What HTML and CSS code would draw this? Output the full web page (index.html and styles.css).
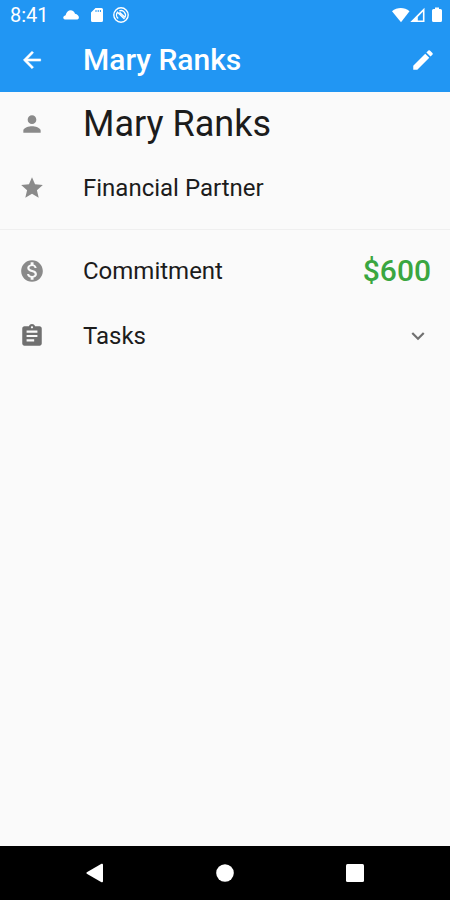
FILE: index.html
```html
<!DOCTYPE html>
<html lang="en">
<head>
<meta charset="utf-8">
<meta name="viewport" content="width=device-width, initial-scale=1">
<title>Mary Ranks</title>
<link rel="stylesheet" href="styles.css">
</head>
<body>
<header class="top">
  <div class="status">
    <span class="clock">8:41</span>
    <svg class="cloud" width="16" height="16" viewBox="0 0 16 16"><path d="M2 12.500C-.5 12-.3 9.200 2.600 8.300 3.500 5 5.500 3.300 7.500 3.300c2.300 0 3.800 1.500 4.500 3.500 3.800.7 5.200 4.700 2.500 5.700z"/></svg>
    <svg class="card" width="12" height="16" viewBox="0 0 12 16"><path fill-rule="evenodd" d="M4.500 1H10.500a1.500 1.500 0 0 1 1.500 1.500v11a1.500 1.500 0 0 1-1.500 1.500h-9A1.500 1.500 0 0 1 0 13.500V5.500zM4.500 3v2h1V3zm2.200 0v2h1V3zm2.200 0v2h1V3z"/></svg>
    <svg class="sync" width="16" height="16" viewBox="0 0 16 16"><g class="line"><circle cx="8" cy="8" r="7.200"/><path d="M5.200 11.500A4.500 4.500 0 0 1 4.500 5.200L11.500 12M6.300 3.900A4.500 4.500 0 0 1 11.900 10.200L6.500 5.200"/></g></svg>
    <span class="signals">
      <svg width="18" height="16" viewBox="0 0 18 16"><path d="M9 15.200L0 4.300C5-.1 12.500-.1 17.500 4.300z"/></svg>
      <svg width="15" height="16" viewBox="0 0 15 16"><path fill-rule="evenodd" d="M14.500 .8v14.200H.3zM12.900 4.800L7.800 10v3.400h5.100z"/></svg>
      <svg class="battery" width="10" height="16" viewBox="0 0 10 16"><path d="M3 .5h4V2h1.500A1.500 1.500 0 0 1 10 3.500v10A1.500 1.500 0 0 1 8.500 15h-7A1.500 1.500 0 0 1 0 13.500v-10A1.500 1.500 0 0 1 1.500 2H3z"/></svg>
    </span>
  </div>
  <div class="bar">
    <button class="icon-button" type="button" aria-label="Back"><svg class="icon bold" viewBox="0 0 24 24"><path d="M20 11H7.830l5.590-5.590L12 4l-8 8 8 8 1.410-1.410L7.830 13H20z"/></svg></button>
    <h1 class="title">Mary Ranks</h1>
    <button class="icon-button" type="button" aria-label="Edit"><svg class="icon" viewBox="0 0 24 24"><path d="M3 17.250V21h3.750L17.810 9.940l-3.750-3.750zM20.710 7.040a1 1 0 0 0 0-1.410l-2.340-2.340a1 1 0 0 0-1.410 0l-1.830 1.830 3.750 3.750z"/></svg></button>
  </div>
</header>
<main class="content">
  <div class="row">
    <svg class="icon" viewBox="0 0 24 24"><path d="M12 12a4 4 0 1 0 0-8 4 4 0 0 0 0 8zm0 2c-2.670 0-8 1.340-8 4v2h16v-2c0-2.660-5.330-4-8-4z"/></svg>
    <h2 class="name">Mary Ranks</h2>
  </div>
  <div class="row">
    <svg class="icon" viewBox="0 0 24 24"><path d="M12 17.270L18.180 21l-1.640-7.030L22 9.240l-7.190-.61L12 2 9.190 8.630 2 9.240l5.460 4.730L5.820 21z"/></svg>
    <span class="label">Financial Partner</span>
  </div>
  <hr class="divider">
  <div class="row">
    <svg class="icon" viewBox="0 0 24 24"><path d="M12 2C6.480 2 2 6.480 2 12s4.480 10 10 10 10-4.480 10-10S17.520 2 12 2zm1.410 16.090V20h-2.670v-1.930c-1.710-.36-3.160-1.460-3.270-3.400h1.960c.1 1.050.82 1.870 2.650 1.870 1.960 0 2.400-.98 2.400-1.590 0-.83-.44-1.610-2.670-2.140-2.480-.6-4.180-1.620-4.180-3.670 0-1.720 1.390-2.840 3.110-3.210V4h2.670v1.950c1.860.45 2.790 1.860 2.850 3.390H14.300c-.05-1.110-.64-1.870-2.220-1.870-1.500 0-2.400.68-2.400 1.640 0 .84.65 1.390 2.670 1.910s4.180 1.390 4.180 3.910c-.01 1.830-1.380 2.830-3.120 3.160z"/></svg>
    <span class="label">Commitment</span>
    <span class="amount">$600</span>
  </div>
  <button class="row tasks" type="button" aria-expanded="false">
    <svg class="icon dark" viewBox="0 0 24 24"><path d="M19 3h-4.180C14.400 1.840 13.300 1 12 1s-2.400.84-2.820 2H5c-1.100 0-2 .9-2 2v14c0 1.100.9 2 2 2h14c1.100 0 2-.9 2-2V5c0-1.100-.9-2-2-2zm-7 0c.55 0 1 .45 1 1s-.45 1-1 1-1-.45-1-1 .45-1 1-1zm2 14H7v-2h7zm3-4H7v-2h10zm0-4H7V7h10z"/></svg>
    <span class="label">Tasks</span>
    <svg class="icon dark" viewBox="0 0 24 24"><path d="M16.590 8.590L12 13.170 7.410 8.590 6 10l6 6 6-6z"/></svg>
  </button>
</main>
<nav class="system" aria-label="System">
  <button class="key" type="button" aria-label="Back"><svg width="20" height="20" viewBox="0 0 20 20"><path d="M1.800 9.300L16.500.8q1.500-.5 1.500 1v16.400q0 1.500-1.500 1L1.800 10.700q-1-.7 0-1.400z"/></svg></button>
  <button class="key" type="button" aria-label="Home"><svg width="20" height="20" viewBox="0 0 20 20"><circle cx="10" cy="10" r="8.800"/></svg></button>
  <button class="key" type="button" aria-label="Recent apps"><svg width="20" height="20" viewBox="0 0 20 20"><rect x="1" y="1" width="18" height="18" rx="1.500"/></svg></button>
</nav>
</body>
</html>
```
FILE: styles.css
```css
* { box-sizing: border-box; }

body {
  margin: 0;
  min-height: 100vh;
  display: flex;
  flex-direction: column;
  background: #fafafa;
  color: #1c1c1c;
  font-family: Roboto, sans-serif;
}

svg { display: block; flex: none; fill: currentColor; }

button {
  border: 0;
  padding: 0;
  background: none;
  color: inherit;
  font: inherit;
  text-align: left;
  cursor: pointer;
}

.top { background: #2196f3; color: #fff; }

.status {
  display: flex;
  align-items: center;
  height: 28px;
  padding: 2px 8px 0 10px;
}

.clock { font-size: 20px; line-height: 28px; margin-right: 14px; }
.cloud { margin-right: 12px; }
.card { margin-right: 10px; }
.line { fill: none; stroke: currentColor; stroke-width: 1.400; }
.signals { display: flex; margin-left: auto; }
.battery { margin-left: 7px; }

.bar, .row {
  display: flex;
  align-items: center;
  gap: 38px;
  height: 64px;
  padding: 0 19px;
}

.bar { padding-right: 14px; }
.icon { width: 26px; height: 26px; }
.bold { stroke: currentColor; stroke-width: 0.500; }

.title {
  flex: 1;
  margin: 0;
  font-size: 30px;
  font-weight: 500;
  line-height: 36px;
}

.content { flex: 1; }
.row { width: 100%; }
.row .icon { color: #8a8a8a; }
.row .dark { color: #707070; }

.name { margin: 0; font-size: 36px; font-weight: 400; line-height: 44px; }
.label { flex: 1; font-size: 24px; line-height: 28px; }
.amount { color: #3aa640; font-size: 30px; font-weight: 500; line-height: 36px; }
.tasks { height: 66px; }

.divider {
  height: 1px;
  margin: 9px 0;
  border: 0;
  background: #efefef;
}

.system {
  display: flex;
  align-items: center;
  justify-content: center;
  gap: 110px;
  height: 54px;
  background: #000;
  color: #fff;
}
```
